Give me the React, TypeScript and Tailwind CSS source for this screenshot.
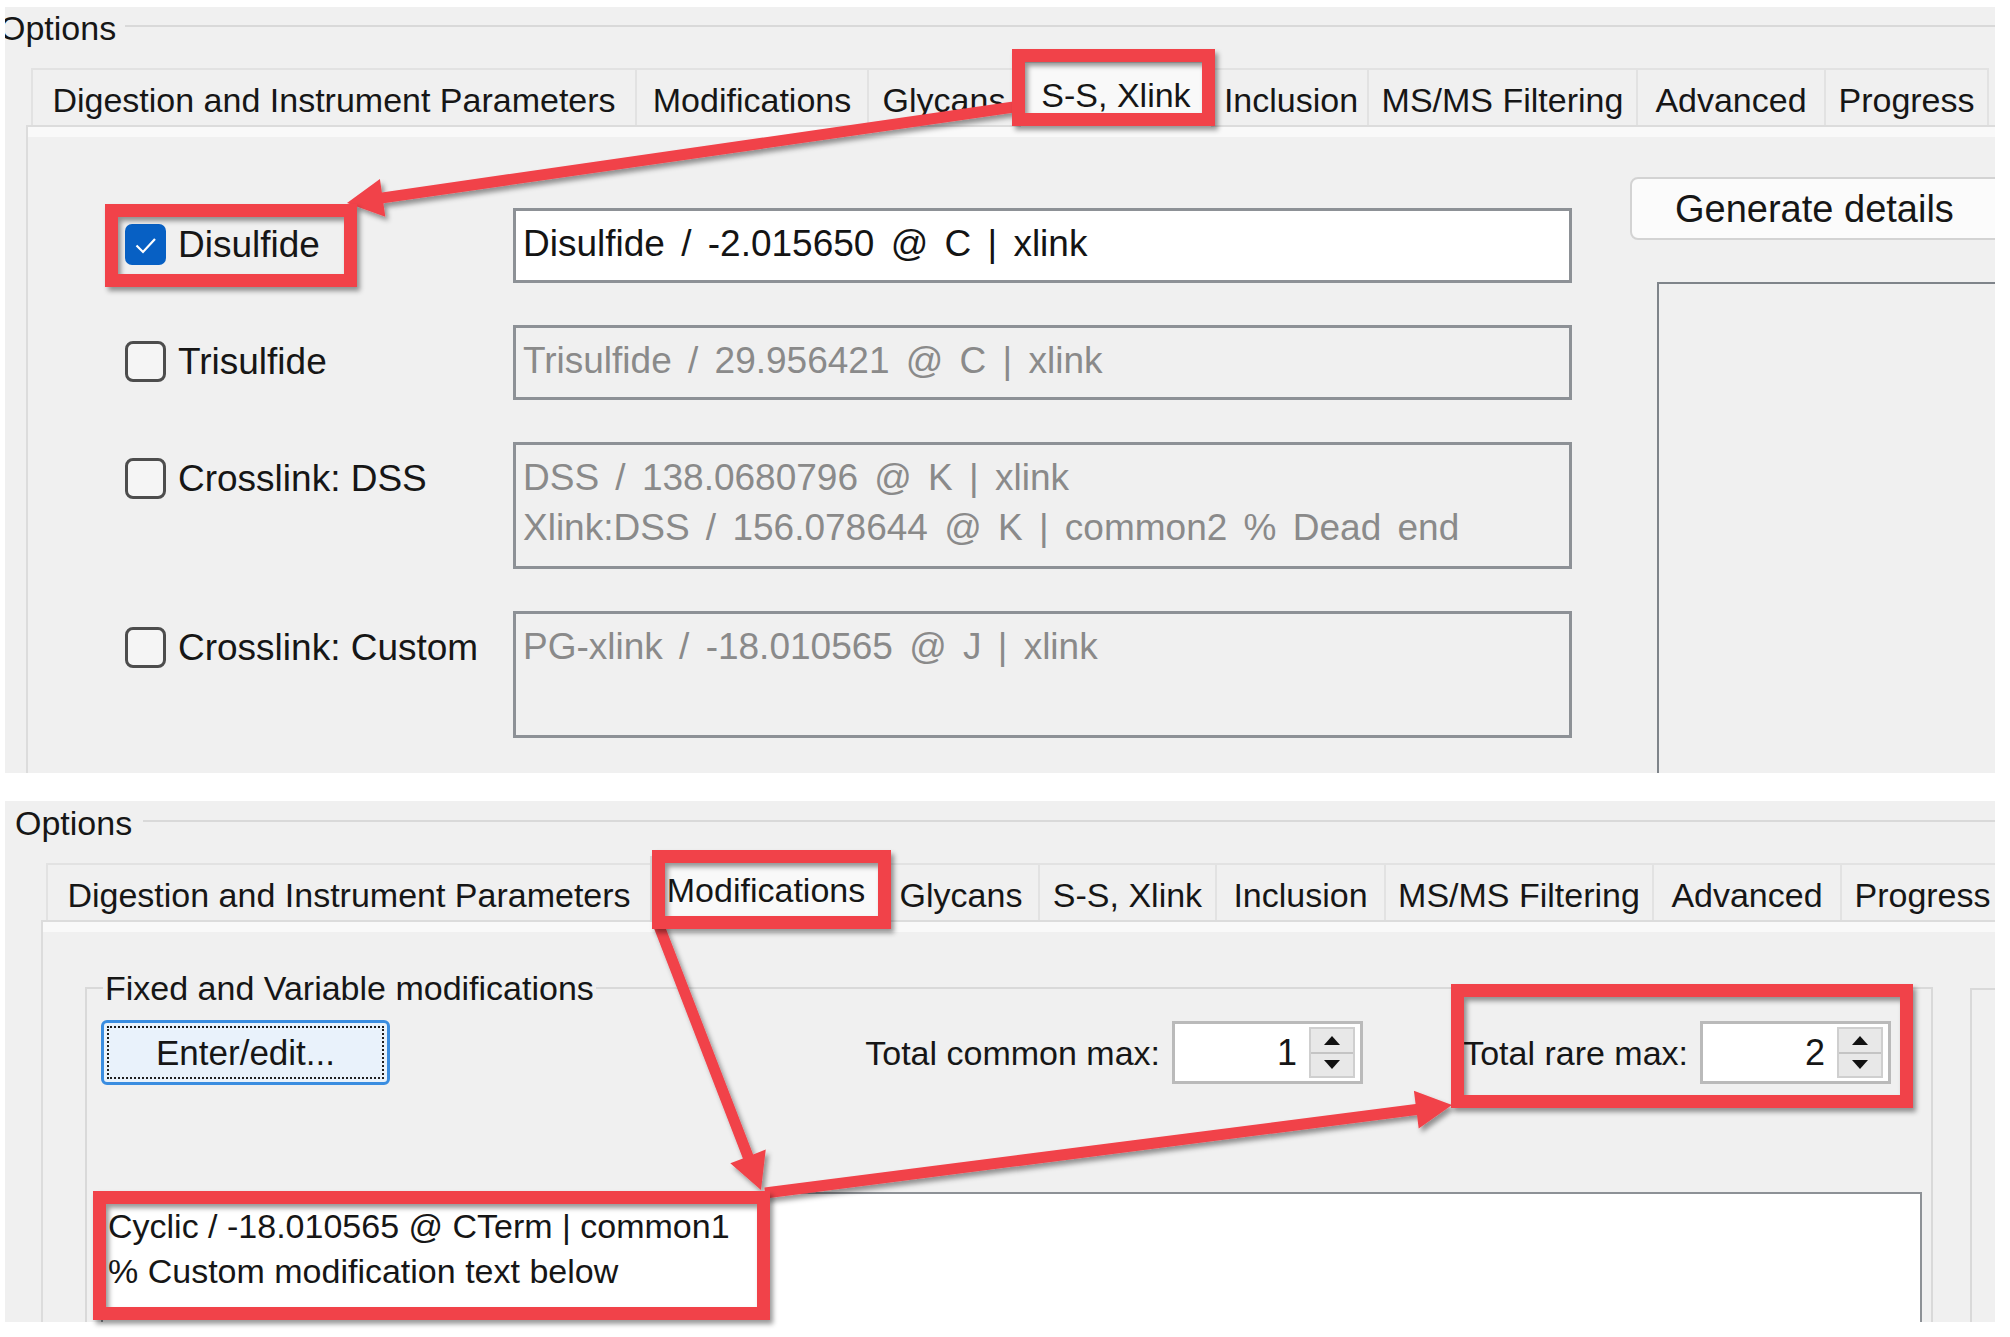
type Tab = { label: string; w: string; sel?: boolean };

const TOP_TABS: Tab[] = [
  { label: "Digestion and Instrument Parameters", w: "w-[604px]" },
  { label: "Modifications", w: "w-[232px]" },
  { label: "Glycans", w: "w-[152px]" },
  { label: "S-S, Xlink", w: "w-[194px]", sel: true },
  { label: "Inclusion", w: "w-[154px]" },
  { label: "MS/MS Filtering", w: "w-[269px]" },
  { label: "Advanced", w: "w-[188px]" },
  { label: "Progress", w: "w-[165px]" },
];

const BOTTOM_TABS: Tab[] = [
  { label: "Digestion and Instrument Parameters", w: "w-[604px]" },
  { label: "Modifications", w: "w-[232px]", sel: true },
  { label: "Glycans", w: "w-[156px]" },
  { label: "S-S, Xlink", w: "w-[177px]" },
  { label: "Inclusion", w: "w-[169px]" },
  { label: "MS/MS Filtering", w: "w-[268px]" },
  { label: "Advanced", w: "w-[188px]" },
  { label: "Progress", w: "w-[165px]" },
];

const ROWS = [
  { label: "Disulfide", checked: true, lines: ["Disulfide / -2.015650 @ C | xlink"], h: "h-[75px]" },
  { label: "Trisulfide", lines: ["Trisulfide / 29.956421 @ C | xlink"], h: "h-[75px]" },
  {
    label: "Crosslink: DSS",
    lines: ["DSS / 138.0680796 @ K | xlink", "Xlink:DSS / 156.078644 @ K | common2 % Dead end"],
    h: "h-[127px]",
  },
  { label: "Crosslink: Custom", lines: ["PG-xlink / -18.010565 @ J | xlink"], h: "h-[127px]" },
];

// red annotation boxes, outer edges in page pixels
const BOXES = [
  [1012, 49, 1215, 126],
  [105, 204, 357, 287],
  [652, 850, 891, 929],
  [1451, 984, 1913, 1108],
  [93, 1191, 770, 1320],
];

const ARROWS = [
  [1014, 107, 347, 203],
  [659, 926, 761, 1190],
  [765, 1193, 1452, 1105],
];

function arrowPoints(x1: number, y1: number, x2: number, y2: number) {
  const w = 11;
  const L = 36;
  const H = 19;
  const len = Math.hypot(x2 - x1, y2 - y1);
  const ux = (x2 - x1) / len;
  const uy = (y2 - y1) / len;
  const px = -uy;
  const py = ux;
  const bx = x2 - ux * L;
  const by = y2 - uy * L;
  const pts = [
    [x1 + (px * w) / 2, y1 + (py * w) / 2],
    [bx + (px * w) / 2, by + (py * w) / 2],
    [bx + px * H, by + py * H],
    [x2, y2],
    [bx - px * H, by - py * H],
    [bx - (px * w) / 2, by - (py * w) / 2],
    [x1 - (px * w) / 2, y1 - (py * w) / 2],
  ];
  return pts.map((p) => p.join(",")).join(" ");
}

function TabStrip({ tabs }: { tabs: Tab[] }) {
  return (
    <div className="flex items-end">
      {tabs.map((t, i) =>
        t.sel ? (
          <div
            key={i}
            className={`${t.w} h-[66px] -mb-[2px] relative shrink-0 flex items-center justify-center bg-[#f9f9f9] border-x-2 border-t-2 border-[#d9d9d9] text-[34px] leading-none whitespace-nowrap`}
          >
            {t.label}
          </div>
        ) : (
          <div
            key={i}
            className={`${t.w} h-[57px] shrink-0 flex items-center justify-center pt-[5px] bg-[#f0f0f0] border-l-2 border-t-2 border-[#e2e2e2] text-[34px] leading-none whitespace-nowrap ${
              i === tabs.length - 1 ? "border-r-2" : ""
            }`}
          >
            {t.label}
          </div>
        )
      )}
    </div>
  );
}

function CheckBox({ checked }: { checked?: boolean }) {
  if (checked) {
    return (
      <div className="w-[41px] h-[41px] shrink-0 rounded-[7px] bg-[#0760c4] flex items-center justify-center">
        <svg viewBox="0 0 41 41" className="w-[41px] h-[41px]">
          <path d="M11.5 21.5 L18 28 L30 15" fill="none" stroke="white" strokeWidth="2.2" />
        </svg>
      </div>
    );
  }
  return <div className="w-[41px] h-[41px] shrink-0 rounded-[8px] border-[3px] border-[#4d4d4d] bg-[#f5f5f5]" />;
}

function Spin({ value }: { value: string }) {
  return (
    <div className="w-[191px] h-[63px] shrink-0 border-[3px] border-[#bababa] bg-white flex">
      <div className="flex-1 flex items-center justify-end pr-[12px] text-[36px] leading-none">{value}</div>
      <div className="w-[46px] my-[3px] mr-[5px] flex flex-col border-2 border-[#cfcfcf] bg-[#e8e8e8]">
        <div className="flex-1 flex items-center justify-center border-b-2 border-[#c4c4c4]">
          <svg viewBox="0 0 16 9" className="w-[16px] h-[9px]">
            <path d="M0 9 L8 0 L16 9 Z" fill="#111" />
          </svg>
        </div>
        <div className="flex-1 flex items-center justify-center">
          <svg viewBox="0 0 16 9" className="w-[16px] h-[9px]">
            <path d="M0 0 L16 0 L8 9 Z" fill="#111" />
          </svg>
        </div>
      </div>
    </div>
  );
}

export default function App() {
  return (
    <div className="relative w-[2010px] h-[1337px] overflow-hidden bg-white text-[#161616] font-['Liberation_Sans',Arial,sans-serif]">
      {/* top screenshot: S-S, Xlink tab */}
      <div className="ml-[5px] mt-[7px] w-[1990px] h-[766px] bg-[#f0f0f0] overflow-hidden flex flex-col">
        <div className="h-[42px] shrink-0 flex items-center">
          <span className="-ml-[6px] text-[34px] leading-none">Options</span>
          <div className="ml-[9px] -mt-[4px] flex-1 h-[2px] bg-[#d9d9d9]" />
        </div>
        <div className="h-[76px] shrink-0 flex items-end ml-[26px]">
          <TabStrip tabs={TOP_TABS} />
        </div>
        <div className="ml-[21px] flex-1 border-l-2 border-t-2 border-[#dcdcdc] flex flex-col">
          <div className="h-[10px] shrink-0 bg-[#f9f9f9]" />
          <div className="flex items-start">
            <div className="flex flex-col gap-[42px] pl-[97px] pt-[71px] shrink-0">
              {ROWS.map((r) => (
                <div key={r.label} className="flex items-start">
                  <div className="w-[388px] shrink-0 flex items-center gap-[12px] pt-[16px]">
                    <CheckBox checked={r.checked} />
                    <span className="text-[37px] leading-[41px] whitespace-nowrap">{r.label}</span>
                  </div>
                  <div
                    className={`w-[1059px] ${r.h} shrink-0 border-[3px] border-[#8d9196] pl-[7px] pt-[8px] text-[37px] leading-[50px] [word-spacing:6px] whitespace-pre ${
                      r.checked ? "bg-white text-[#141414]" : "bg-[#f0f0f0] text-[#8a8a8a]"
                    }`}
                  >
                    {r.lines.map((l) => (
                      <div key={l}>{l}</div>
                    ))}
                  </div>
                </div>
              ))}
            </div>
            <div className="ml-[58px] pt-[40px] w-[420px] shrink-0 flex flex-col">
              <div className="h-[63px] rounded-[8px] border-2 border-[#d3d3d3] bg-[#fbfbfb] pl-[43px] flex items-center text-[38px] leading-none whitespace-nowrap">
                Generate details
              </div>
              <div className="mt-[42px] ml-[27px] h-[600px] border-l-2 border-t-2 border-[#7f848a]" />
            </div>
          </div>
        </div>
      </div>

      {/* bottom screenshot: Modifications tab */}
      <div className="ml-[5px] mt-[28px] w-[1990px] h-[521px] bg-[#f0f0f0] overflow-hidden flex flex-col">
        <div className="h-[44px] shrink-0 flex items-center">
          <span className="ml-[10px] text-[34px] leading-none">Options</span>
          <div className="ml-[11px] -mt-[4px] flex-1 h-[2px] bg-[#d9d9d9]" />
        </div>
        <div className="h-[75px] shrink-0 flex items-end ml-[41px]">
          <TabStrip tabs={BOTTOM_TABS} />
        </div>
        <div className="ml-[36px] flex-1 border-l-2 border-t-2 border-[#dcdcdc] flex flex-col">
          <div className="h-[10px] shrink-0 bg-[#f9f9f9]" />
          <div className="flex items-start mt-[36px] ml-[42px]">
            <fieldset className="w-[1848px] shrink-0 border-2 border-[#d9d9d9]">
              <legend className="ml-[16px] px-[2px] text-[34px] leading-[40px]">Fixed and Variable modifications</legend>
              <div className="flex items-center pl-[14px] pt-[12px]">
                <div className="w-[289px] h-[65px] shrink-0 rounded-[6px] border-[3px] border-[#3a8de0] bg-[#e9f2fb] p-[3px]">
                  <div className="w-full h-full border-2 border-dotted border-[#1e1e1e] flex items-center justify-center text-[35px] leading-none">
                    Enter/edit...
                  </div>
                </div>
                <div className="ml-[450px] w-[320px] shrink-0 text-right text-[34px] leading-none whitespace-nowrap">
                  Total common max:
                </div>
                <div className="ml-[12px]">
                  <Spin value="1" />
                </div>
                <div className="ml-[17px] w-[308px] shrink-0 text-right text-[34px] leading-none whitespace-nowrap">
                  Total rare max:
                </div>
                <div className="ml-[12px]">
                  <Spin value="2" />
                </div>
              </div>
              <div className="mt-[107px] ml-[14px] w-[1821px] h-[200px] bg-white border-2 border-[#8d9196] pl-[5px] pt-[10px] text-[34px] leading-[45px] whitespace-pre">
                <div>Cyclic / -18.010565 @ CTerm | common1</div>
                <div>% Custom modification text below</div>
              </div>
            </fieldset>
            <div className="ml-[37px] mt-[20px] w-[100px] h-[400px] shrink-0 border-l-2 border-t-2 border-[#d9d9d9]" />
          </div>
        </div>
      </div>

      {/* red annotations */}
      <svg className="absolute inset-0 w-[2010px] h-[1337px] pointer-events-none" viewBox="0 0 2010 1337">
        <defs>
          <filter id="shadow" x="-10%" y="-10%" width="130%" height="130%">
            <feDropShadow dx="3" dy="4" stdDeviation="2.5" floodColor="#000" floodOpacity="0.4" />
          </filter>
        </defs>
        <g filter="url(#shadow)" fill="#f1424a">
          {ARROWS.map((a, i) => (
            <polygon key={i} points={arrowPoints(a[0], a[1], a[2], a[3])} />
          ))}
        </g>
        <g filter="url(#shadow)" fill="none" stroke="#f1424a" strokeWidth="13">
          {BOXES.map((b, i) => (
            <rect key={i} x={b[0] + 6.5} y={b[1] + 6.5} width={b[2] - b[0] - 13} height={b[3] - b[1] - 13} />
          ))}
        </g>
      </svg>
    </div>
  );
}
